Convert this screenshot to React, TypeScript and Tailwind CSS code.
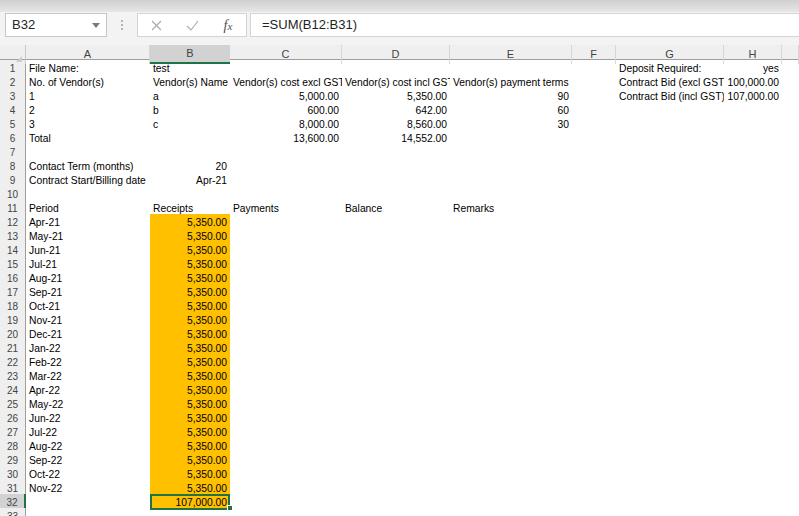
import React from 'react';

type Cell = { v: string; right?: boolean };

const r = (v: string): Cell => ({ v, right: true });
const l = (v: string): Cell => ({ v });

const COLS = ['A', 'B', 'C', 'D', 'E', 'F', 'G', 'H', ''];

const months = [
  'Apr-21', 'May-21', 'Jun-21', 'Jul-21', 'Aug-21', 'Sep-21', 'Oct-21', 'Nov-21', 'Dec-21', 'Jan-22',
  'Feb-22', 'Mar-22', 'Apr-22', 'May-22', 'Jun-22', 'Jul-22', 'Aug-22', 'Sep-22', 'Oct-22', 'Nov-22',
];

const top: (Cell | null)[][] = [
  [l('File Name:'), l('test'), null, null, null, null, l('Deposit Required:'), r('yes')],
  [l('No. of Vendor(s)'), l('Vendor(s) Name'), l('Vendor(s) cost excl GST'), l('Vendor(s) cost incl GST'), l('Vendor(s) payment terms'), null, l('Contract Bid (excl GST)'), r('100,000.00')],
  [l('1'), l('a'), r('5,000.00'), r('5,350.00'), r('90'), null, l('Contract Bid (incl GST)'), r('107,000.00')],
  [l('2'), l('b'), r('600.00'), r('642.00'), r('60')],
  [l('3'), l('c'), r('8,000.00'), r('8,560.00'), r('30')],
  [l('Total'), null, r('13,600.00'), r('14,552.00')],
  [],
  [l('Contact Term (months)'), r('20')],
  [l('Contract Start/Billing date'), r('Apr-21')],
  [],
  [l('Period'), l('Receipts'), l('Payments'), l('Balance'), l('Remarks')],
];

const rows: (Cell | null)[][] = [
  ...top,
  ...months.map((m) => [l(m), r('5,350.00')]),
  [null, r('107,000.00')],
  [],
];

const grid = 'grid grid-cols-[26px_124px_80px_112px_108px_122px_44px_108px_58px_1fr]';

function FormulaBar() {
  return (
    <div className="flex h-[33px] items-start bg-[#f3f3f3] pt-[1px]">
      <div className="ml-[5px] flex h-[24px] w-[102px] items-center justify-between border border-[#c6c6c6] bg-white pl-[6px] pr-[6px]">
        <span className="text-[13px] text-[#262626]">B32</span>
        <svg width="8" height="5" viewBox="0 0 8 5">
          <path d="M0 0h8L4 5z" fill="#7a7a7a" />
        </svg>
      </div>
      <div className="flex h-[24px] w-[30px] flex-col items-center justify-center gap-[2px]">
        <span className="h-[2px] w-[2px] bg-[#b4b4b4]" />
        <span className="h-[2px] w-[2px] bg-[#b4b4b4]" />
        <span className="h-[2px] w-[2px] bg-[#b4b4b4]" />
      </div>
      <div className="flex h-[24px] w-[110px] items-center border border-[#d4d4d4] bg-white">
        <div className="flex w-[36px] justify-center">
          <svg width="11" height="11" viewBox="0 0 11 11">
            <path d="M1 1l9 9M10 1l-9 9" stroke="#a9a9a9" strokeWidth="1.1" />
          </svg>
        </div>
        <div className="flex w-[36px] justify-center">
          <svg width="13" height="11" viewBox="0 0 13 11">
            <path d="M1 6l4 4 7-9" stroke="#a9a9a9" strokeWidth="1.1" fill="none" />
          </svg>
        </div>
        <div className="flex w-[36px] justify-center">
          <span className="font-['Liberation_Serif',serif] text-[14px] italic text-[#505050]">
            f<span className="text-[11px]">x</span>
          </span>
        </div>
      </div>
      <div className="ml-[3px] flex h-[24px] flex-1 items-center border border-r-0 border-[#d4d4d4] bg-white pl-[11px]">
        <span className="text-[13px] text-[#1f1f1f]">=SUM(B12:B31)</span>
      </div>
    </div>
  );
}

function ColumnHeaders() {
  return (
    <div className={`${grid} h-[15px] border-b border-[#9e9e9e] bg-[#efefef]`}>
      <div className="relative border-r border-[#c8c8c8]">
        <svg className="absolute right-[3px] bottom-[2px]" width="6" height="6" viewBox="0 0 6 6">
          <path d="M6 0v6H0z" fill="#cdcdcd" />
        </svg>
      </div>
      {COLS.map((c, i) => (
        <div
          key={i}
          className={`flex items-center justify-center text-[11px] text-[#444] ${
            c === 'B'
              ? 'border-b-2 border-[#217346] bg-[#d2d2d2]'
              : 'border-r border-[#d6d6d6]'
          }`}
        >
          {c}
        </div>
      ))}
    </div>
  );
}

export default function App() {
  return (
    <div className="relative h-[516px] w-[799px] overflow-hidden bg-white font-['Liberation_Sans',Arial,sans-serif]">
      <div className="h-[12px] bg-gradient-to-b from-[#d0d0d0] to-[#e6e6e6]" />
      <FormulaBar />
      <ColumnHeaders />
      {rows.map((row, ri) => {
        const n = ri + 1;
        return (
          <div key={ri} className={`${grid} h-[14px]`}>
            <div
              className={`flex items-center justify-center pt-[1px] text-[10px] text-[#444] ${
                n === 32
                  ? 'border-r-2 border-[#217346] bg-[#d2d2d2]'
                  : 'border-r border-[#9e9e9e] bg-[#efefef]'
              }`}
            >
              {n}
            </div>
            {Array.from({ length: 9 }).map((_, ci) => {
              const cell = row[ci];
              const orange = ci === 1 && n >= 12 && n <= 32;
              const selected = ci === 1 && n === 32;
              return (
                <div
                  key={ci}
                  className={`relative flex items-center overflow-hidden whitespace-nowrap px-[3px] pt-[2px] text-[10.3px] leading-none text-black ${
                    cell?.right ? 'justify-end' : 'justify-start'
                  } ${orange ? 'bg-[#ffc000]' : ''}`}
                >
                  {cell?.v}
                  {selected && (
                    <div className="pointer-events-none absolute inset-0 border-2 border-[#217346]" />
                  )}
                </div>
              );
            })}
          </div>
        );
      })}
      {/* fill handle of the active cell */}
      <div className="pointer-events-none absolute left-[227px] top-[505px] h-[6px] w-[6px] border border-white bg-[#217346]" />
    </div>
  );
}
